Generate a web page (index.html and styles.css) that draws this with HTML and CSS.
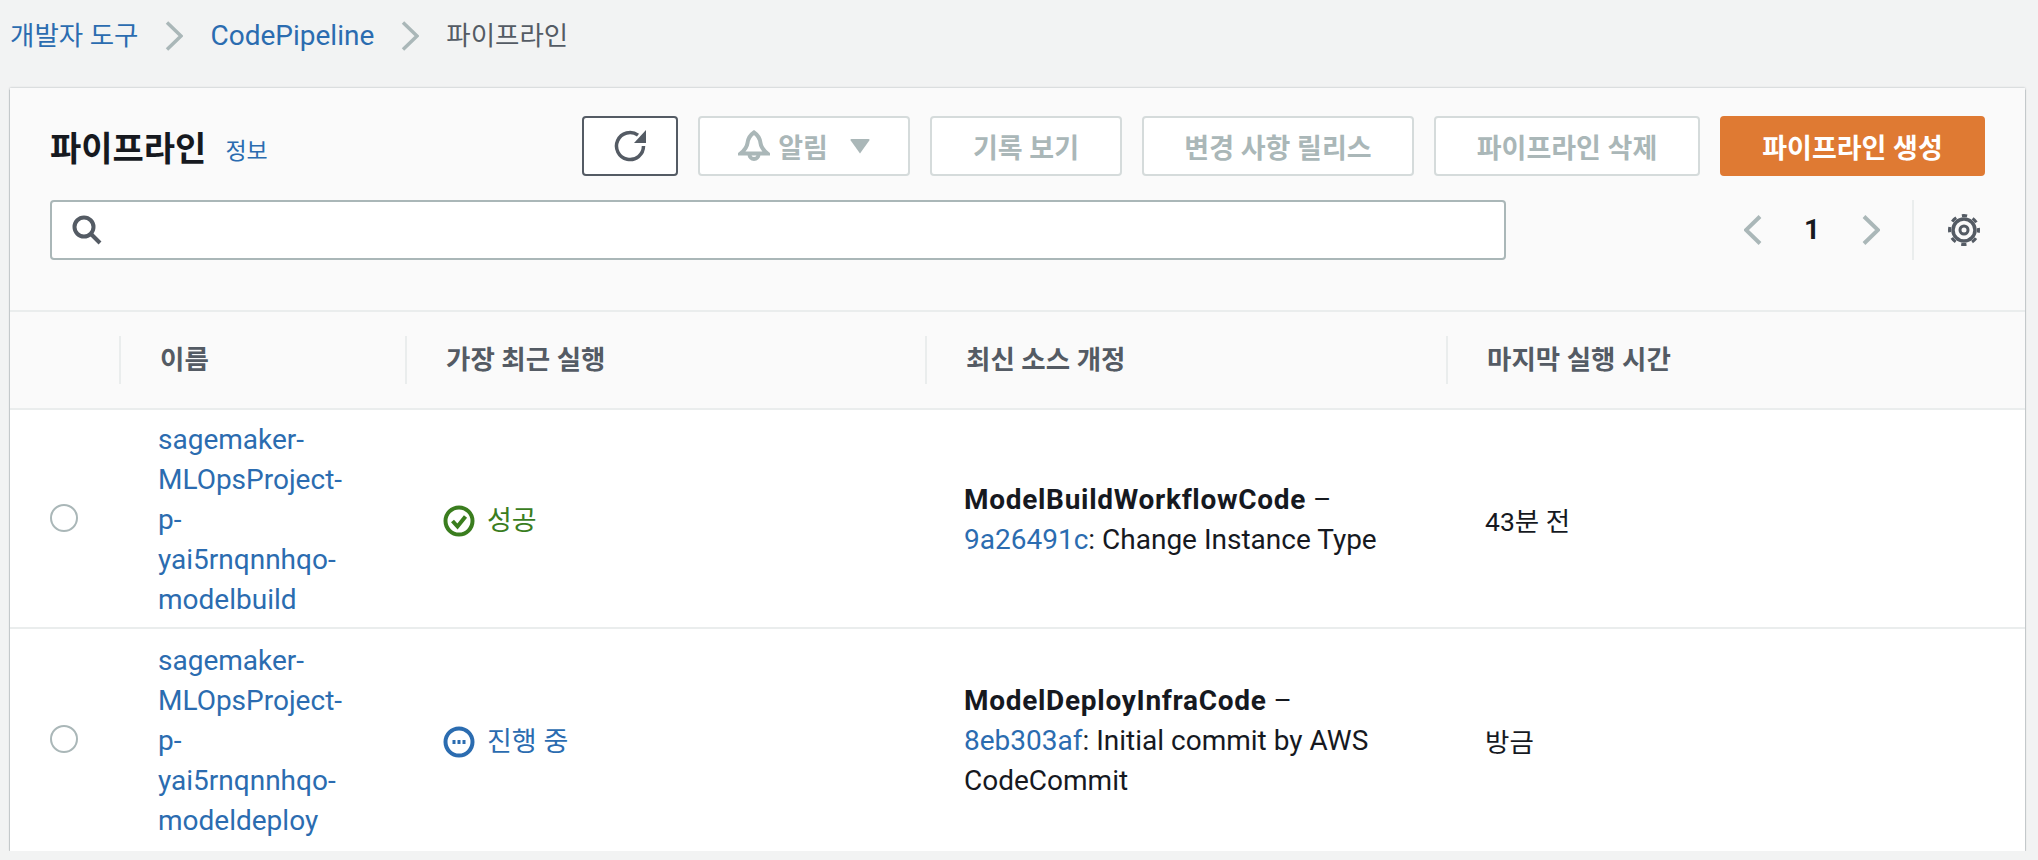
FILE: index.html
```html
<!DOCTYPE html>
<html lang="ko">
<head>
  <meta charset="UTF-8" />
  <title>파이프라인</title>
  <link rel="stylesheet" href="styles.css">
</head>
<body>
  <nav class="breadcrumbs">
    <a class="ko" href="#">개발자 도구</a>
    <svg class="crumb-sep" viewBox="0 0 18 30"><path d="M2 1.500 16 15 2 28.500"/></svg>
    <a href="#">CodePipeline</a>
    <svg class="crumb-sep" viewBox="0 0 18 30"><path d="M2 1.500 16 15 2 28.500"/></svg>
    <span class="ko">파이프라인</span>
  </nav>

  <main class="card">
    <div class="card-head">
      <div class="toolbar">
        <h1>파이프라인</h1>
        <a class="info" href="#">정보</a>
        <div class="actions">
          <button class="btn btn-refresh">
            <svg class="icon-refresh" viewBox="0 0 32 32"><path d="M29.500 16A13.500 13.500 0 1 1 24 5.200"/><path class="fill" d="M32 0v13H20z"/></svg>
          </button>
          <button class="btn btn-notify" disabled>
            <svg class="icon-bell" viewBox="0 0 32 32"><path d="M16 2.500c-4.500 3-6 6.500-6.500 10.500-.5 4-2.500 7-7 10.500h27c-4.500-3.500-6.500-6.500-7-10.500-.5-4-2-7.500-6.500-10.500z"/><path d="M11.500 24.500a4.500 4.500 0 0 0 9 0"/></svg>
            <span>알림</span>
            <svg class="icon-caret" viewBox="0 0 20 16"><path d="M1.500 1h17a1 1 0 0 1 .8 1.500L10 15.500.7 2.500A1 1 0 0 1 1.500 1z"/></svg>
          </button>
          <button class="btn btn-history" disabled>기록 보기</button>
          <button class="btn btn-release" disabled>변경 사항 릴리스</button>
          <button class="btn btn-delete" disabled>파이프라인 삭제</button>
          <button class="btn btn-primary">파이프라인 생성</button>
        </div>
      </div>
      <div class="filter-row">
        <label class="search">
          <svg class="icon-search" viewBox="0 0 30 30"><circle cx="12" cy="12" r="9.500"/><path d="M19 19l9 9"/></svg>
          <input type="text" />
        </label>
        <div class="pager">
          <svg class="pager-arrow" viewBox="0 0 18 30"><path d="M16 1.500 2 15l14 13.500"/></svg>
          <span class="page-num">1</span>
          <svg class="pager-arrow" viewBox="0 0 18 30"><path d="M2 1.500 16 15 2 28.500"/></svg>
        </div>
        <div class="settings">
          <svg class="icon-gear" viewBox="0 0 32 32">
            <circle class="teeth" cx="16" cy="16" r="14.500"/>
            <circle cx="16" cy="16" r="11"/>
            <circle class="hub" cx="16" cy="16" r="4"/>
          </svg>
        </div>
      </div>
    </div>

    <div class="table-head cols">
      <div class="th th-select"></div>
      <div class="th">이름</div>
      <div class="th">가장 최근 실행</div>
      <div class="th">최신 소스 개정</div>
      <div class="th">마지막 실행 시간</div>
    </div>

    <div class="row cols">
      <div class="td-select"><span class="radio"></span></div>
      <div class="td td-name"><a href="#">sagemaker-MLOpsProject-p-yai5rnqnnhqo-modelbuild</a></div>
      <div class="td status ok">
        <svg viewBox="0 0 32 32"><circle cx="16" cy="16" r="13.500"/><path d="M9.500 16l5 5.500 8-10"/></svg>
        <span>성공</span>
      </div>
      <div class="td">
        <div><strong>ModelBuildWorkflowCode</strong> –</div>
        <div><a href="#">9a26491c</a>: Change Instance Type</div>
      </div>
      <div class="td td-time ko">43분 전</div>
    </div>

    <div class="row cols">
      <div class="td-select"><span class="radio"></span></div>
      <div class="td td-name"><a href="#">sagemaker-MLOpsProject-p-yai5rnqnnhqo-modeldeploy</a></div>
      <div class="td status running">
        <svg viewBox="0 0 32 32"><circle cx="16" cy="16" r="13.500"/><path class="dots" d="M9.500 16h13"/></svg>
        <span>진행 중</span>
      </div>
      <div class="td">
        <div><strong>ModelDeployInfraCode</strong> –</div>
        <div><a href="#">8eb303af</a>: Initial commit by AWS CodeCommit</div>
      </div>
      <div class="td td-time ko">방금</div>
    </div>
  </main>
</body>
</html>
```

FILE: styles.css
```css
body {
  margin: 0;
  background: #f2f3f3;
  color: #16191f;
  font-family: Roboto, 'Noto Sans CJK KR', sans-serif;
  font-size: 28px;
  line-height: 40px;
}

a {
  color: #2b6cb0;
  text-decoration: none;
}

svg {
  display: block;
  flex: none;
  fill: none;
}

/* hangul runs a bit large next to Roboto at the same size */
.ko {
  font-size: 26.500px;
}

.breadcrumbs {
  height: 88px;
  box-sizing: border-box;
  padding: 16px 0 0 10px;
  display: flex;
  align-items: flex-start;
  color: #545b64;
}

.crumb-sep {
  width: 18px;
  height: 30px;
  margin: 5px 27px 0;
  stroke: #aab7b8;
  stroke-width: 3.500;
}

.card {
  margin: 0 13px 0 10px;
  background: #fff;
  box-shadow: 0 2px 1px rgba(0, 28, 36, 0.6), 0 0 2px rgba(0, 28, 36, 0.3);
}

.card-head {
  background: #fafafa;
  padding: 28px 40px 50px;
  border-bottom: 2px solid #eaeded;
}

.toolbar {
  display: flex;
  align-items: center;
  height: 60px;
}

h1 {
  margin: 6px 0 0;
  font-size: 34px;
  font-weight: 700;
  line-height: 40px;
}

.info {
  margin-left: 19px;
  margin-top: 12px;
  font-size: 23px;
}

.actions {
  margin-left: auto;
  display: flex;
  gap: 20px;
}

.btn {
  height: 60px;
  box-sizing: border-box;
  border: 2px solid #d5dbdb;
  border-radius: 4px;
  background: #fff;
  color: #aab7b8;
  font-family: inherit;
  font-size: 27px;
  font-weight: 700;
  padding: 0;
  display: flex;
  align-items: center;
  justify-content: center;
}

.btn-refresh {
  width: 96px;
  border-color: #545b64;
}

.icon-refresh {
  width: 32px;
  height: 32px;
  stroke: #545b64;
  stroke-width: 3.500;
}

.icon-refresh .fill {
  fill: #545b64;
  stroke: none;
}

.btn-notify { width: 212px; }

.icon-bell {
  width: 32px;
  height: 32px;
  margin-right: 8px;
  stroke: #aab7b8;
  stroke-width: 4;
}

.icon-caret {
  width: 20px;
  height: 16px;
  margin-left: 22px;
  fill: #aab7b8;
}

.btn-history { width: 192px; }
.btn-release { width: 272px; }
.btn-delete { width: 266px; }

.btn-primary {
  width: 265px;
  border-color: #df7a33;
  background: #df7a33;
  color: #fff;
}

.filter-row {
  margin-top: 24px;
  display: flex;
  align-items: center;
  height: 60px;
}

.search {
  width: 1456px;
  height: 60px;
  box-sizing: border-box;
  border: 2px solid #aab7b8;
  border-radius: 4px;
  background: #fff;
  display: flex;
  align-items: center;
  padding-left: 20px;
}

.icon-search {
  width: 30px;
  height: 30px;
  stroke: #545b64;
  stroke-width: 4;
}

.search input {
  flex: 1;
  border: 0;
  outline: 0;
  background: none;
  min-width: 0;
}

.pager {
  margin-left: 238px;
  display: flex;
  align-items: center;
  width: 136px;
  justify-content: space-between;
}

.pager-arrow {
  width: 18px;
  height: 30px;
  stroke: #aab7b8;
  stroke-width: 4;
}

.page-num {
  font-weight: 700;
}

.settings {
  margin-left: 32px;
  height: 60px;
  padding-left: 34px;
  border-left: 2px solid #eaeded;
  display: flex;
  align-items: center;
}

.icon-gear {
  width: 32px;
  height: 32px;
  stroke: #545b64;
  stroke-width: 3.500;
}

.icon-gear .teeth {
  stroke-width: 3;
  stroke-dasharray: 5.400 6;
  stroke-dashoffset: 2.700;
}

.icon-gear .hub {
  stroke-width: 3;
}

.cols {
  display: grid;
  grid-template-columns: 109px 286px 520px 521px 1fr;
}

.table-head {
  background: #fafafa;
  height: 98px;
  box-sizing: border-box;
  padding: 24px 0;
  border-bottom: 2px solid #eaeded;
}

.th {
  height: 48px;
  padding-left: 39px;
  border-left: 2px solid #eaeded;
  color: #545b64;
  font-size: 26.500px;
  font-weight: 700;
  display: flex;
  align-items: center;
}

.th-select {
  border-left: 0;
}

.row {
  min-height: 219px;
  box-sizing: border-box;
  border-bottom: 2px solid #eaeded;
}

.row:last-child {
  min-height: 222px;
  border-bottom: 0;
}

.td {
  padding: 2px 40px 0 39px;
  align-self: center;
}

.td-name {
  padding-right: 50px;
}

.td-time {
  padding-top: 6px;
}

.td strong {
  letter-spacing: 0.700px;
}

.td-select {
  padding: 0 0 2px 40px;
  align-self: center;
}

.radio {
  display: block;
  width: 28px;
  height: 28px;
  box-sizing: border-box;
  border: 2px solid #aab7b8;
  border-radius: 50%;
  background: #fff;
}

.status {
  display: flex;
  align-items: center;
  gap: 12px;
  padding: 4px 0 0 38px;
  font-size: 27px;
}

.status svg {
  width: 32px;
  height: 32px;
  stroke-width: 4;
}

.ok { color: #3a7d1e; }
.ok svg { stroke: #3a7d1e; }

.running { color: #2b6cb0; }
.running svg { stroke: #2b6cb0; }

.dots {
  stroke-dasharray: 3 2;
}
```
